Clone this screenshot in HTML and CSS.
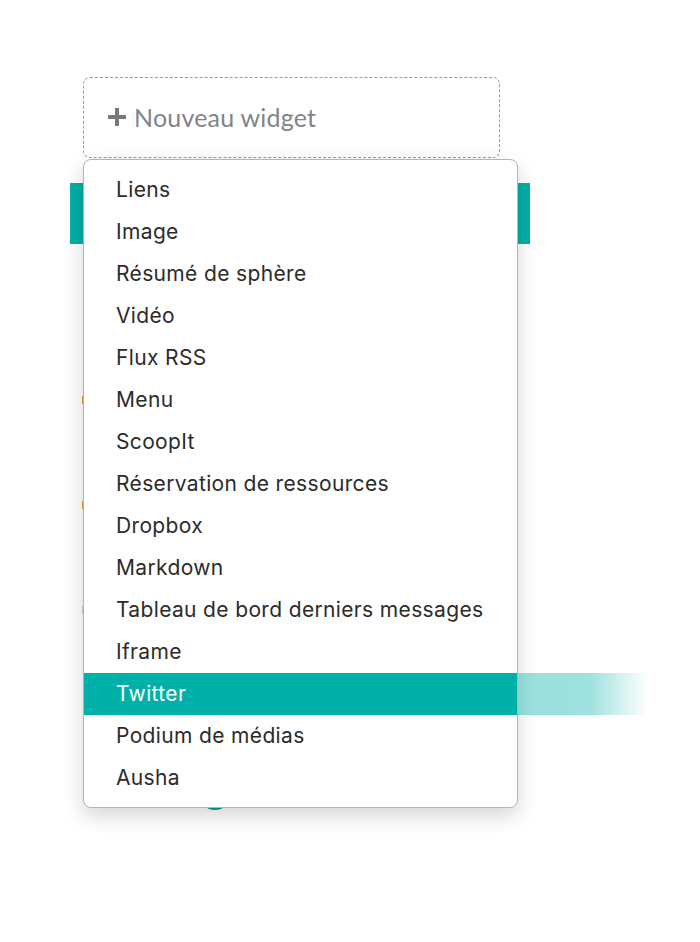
FILE: index.html
```html
<!DOCTYPE html>
<html lang="fr">
<head>
    <meta charset="UTF-8">
    <meta name="viewport" content="width=device-width, initial-scale=1.0">
    <title>Nouveau widget</title>
    <link rel="stylesheet" href="styles.css">
</head>
<body>
    <div class="column">
        <div class="add-widget">
            <svg class="plus" width="18" height="18" viewBox="0 0 18 18">
                <path d="M9 1v16M1 9h16" stroke="#77777c" stroke-width="4" stroke-linecap="round"/>
            </svg>
            <span>Nouveau widget</span>
        </div>
        <div class="teal-bar"></div>
        <div class="panel-body">
            <span class="mark mark-orange" style="top: 152px"></span>
            <span class="mark mark-orange" style="top: 257px"></span>
            <span class="mark mark-grey" style="top: 362px"></span>
            <span class="bubble"></span>
        </div>

        <!-- dropdown open over the column -->
        <ul class="dropdown">
            <li>Liens</li>
            <li>Image</li>
            <li>Résumé de sphère</li>
            <li>Vidéo</li>
            <li>Flux RSS</li>
            <li>Menu</li>
            <li>ScoopIt</li>
            <li>Réservation de ressources</li>
            <li>Dropbox</li>
            <li>Markdown</li>
            <li>Tableau de bord derniers messages</li>
            <li>Iframe</li>
            <li class="active">Twitter<span class="drag-ghost"></span></li>
            <li>Podium de médias</li>
            <li>Ausha</li>
        </ul>
    </div>
</body>
</html>
```

FILE: styles.css
```css
body {
    margin: 0;
    min-height: 942px;
    background-color: #ffffff;
    font-family: 'Inter', 'Noto Sans', sans-serif;
}
.column {
    position: relative;
    width: 460px;
    margin-left: 70px;
    padding-top: 77px;
}
.add-widget {
    box-sizing: border-box;
    display: flex;
    align-items: center;
    gap: 8px;
    width: 417px;
    height: 81px;
    margin-left: 13px;
    border: 1.5px dashed #9a9a9e;
    border-radius: 7px;
    padding: 0 0 2px 24px;
    font-family: 'Lato', sans-serif;
    font-size: 25px;
    letter-spacing: 0.2px;
    color: #838389;
}
.teal-bar {
    height: 61px;
    margin-top: 25px;
    background-color: #00b0a8;
}
.panel-body {
    position: relative;
    height: 620px;
}
.mark {
    position: absolute;
    left: 12px;
    width: 2px;
    height: 8px;
}
.mark-orange {
    background-color: #e0a030;
}
.mark-grey {
    background-color: #c8c8c8;
}
.bubble {
    position: absolute;
    left: 128px;
    top: 532px;
    width: 34px;
    height: 34px;
    border-radius: 50%;
    background-color: #00a39c;
}
.dropdown {
    position: absolute;
    top: 159px;
    left: 13px;
    width: 435px;
    box-sizing: border-box;
    margin: 0;
    padding: 9px 0 8px;
    list-style: none;
    background-color: #ffffff;
    border: 1px solid #b4b4b6;
    border-radius: 8px;
    box-shadow: 0 8px 20px rgba(0, 0, 0, 0.17);
}
.dropdown li {
    position: relative;
    height: 42px;
    line-height: 42px;
    padding-left: 32px;
    font-size: 21px;
    letter-spacing: 0.35px;
    color: #2b2b2b;
}
.dropdown li.active {
    background-color: #00b1a9;
    color: #ffffff;
}
.drag-ghost {
    position: absolute;
    top: 0;
    left: 434px;
    width: 130px;
    height: 42px;
    background: linear-gradient(to right, rgba(0, 177, 169, 0.4) 0%, rgba(0, 177, 169, 0.38) 55%, rgba(0, 177, 169, 0) 100%);
}
```
